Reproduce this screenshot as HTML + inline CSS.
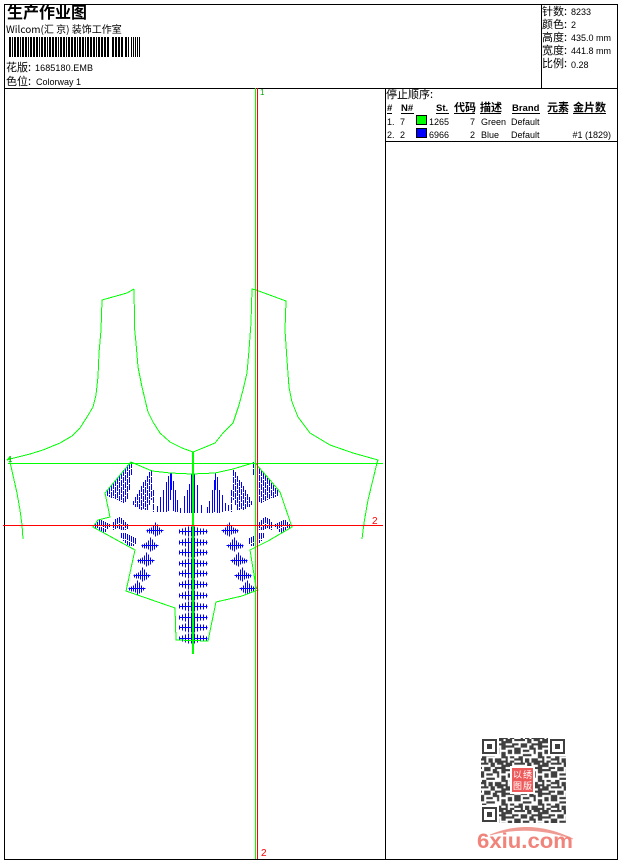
<!DOCTYPE html>
<html lang="zh">
<head>
<meta charset="utf-8">
<title>生产作业图</title>
<style>
html,body{margin:0;padding:0;background:#fff;width:620px;height:860px;overflow:hidden}
svg{display:block}
text{font-family:"Liberation Sans","WenQuanYi Zen Hei","Noto Sans CJK SC",sans-serif;font-size:9px;fill:#000}
.c{font-family:"WenQuanYi Zen Hei","Noto Sans CJK SC",sans-serif;font-size:11px}
.b{font-weight:bold;font-size:9.5px}
.cb{font-family:"WenQuanYi Zen Hei","Noto Sans CJK SC",sans-serif;font-size:11px;font-weight:bold}
.g{fill:none;stroke:#0f0;stroke-width:1}
.s{fill:none;stroke:#00f;stroke-width:1;shape-rendering:crispEdges}
.d{fill:none;stroke:#0000ff;stroke-width:1;stroke-dasharray:6 1;shape-rendering:auto}
</style>
</head>
<body>
<svg xmlns="http://www.w3.org/2000/svg" width="620" height="860" viewBox="0 0 620 860">
<defs>
<g id="comb"><path class="s" d="M179.500 .5H207.500M179.500-1.500v4M182.500-2.500v6M185.500-3.500v8M188.500-4.500v10M191.500-4.500v10M194.500-4.500v10M197.500-3.500v8M200.500-2.500v6M203.500-2.500v6M206.500-1.500v4"/></g>
<g id="fish"><path class="s" d="M-8.500 .5H8.500M-7.500-.5v3M-5.500-1.500v5M-3.500-2.500v6M-1.500-4.500v9M.5-7.500v14M2.500-5.500v11M4.500-2.500v7M6.500-.5v3"/></g>
<g id="half">
<path class="d" d="M107.500 490V496M109.500 488V497M111.500 485V498M113.500 483V498M115.500 480V499M117.500 478V500M119.500 475V501M121.500 473V502M123.500 470V503M125.500 468V502M127.500 465V500M129.500 463V490M131.500 462V475"/>
<path class="d" d="M133.500 501V505M135.500 497V507M137.500 494V508M139.500 490V509M141.500 486V510M143.500 482V510M145.500 480V510M147.500 476V511M149.500 472V505M151.500 470V500M153.500 490V512"/>
<path class="d" d="M95.500 524v4M97.500 522v8M99.500 520v10M101.500 520v12M103.500 521v12M105.500 522v10M107.500 523v6M109.500 524v3M113.500 522v8M115.500 519v10M117.500 518v10M119.500 517v12M121.500 518v12M123.500 520v10M125.500 522v8M127.500 524v5M121.500 533v5M123.500 533v8M125.500 533v10M127.500 534v11M129.500 535v11M131.500 536v10M133.500 537v9M135.500 538v6"/>
<use href="#fish" x="155" y="530"/><use href="#fish" x="150" y="545"/><use href="#fish" x="146" y="560"/><use href="#fish" x="142" y="575"/><use href="#fish" x="137" y="588"/>
</g>
<pattern id="qr" width="17" height="11" patternUnits="userSpaceOnUse" patternTransform="translate(482 739) scale(2.15)">
<path fill="#3f3f3f" d="M0 0h3v1H0zM4 0h2v2H4zM7 0h3v1H7zM11 0h3v2h-3zM15 0h2v1h-2zM1 2h3v2H1zM6 2h3v1H6zM9 1h2v4H9zM14 2h3v1h-3zM5 3h2v2H5zM11 3h4v1h-4zM0 4h1v3H0zM2 5h3v1H2zM7 4h1v3H7zM12 5h2v2h-2zM15 4h2v3h-2zM2 7h4v1H2zM9 6h2v3H9zM13 8h2v1h-2zM0 8h2v2H0zM3 9h2v2H3zM6 9h3v2H6zM11 8h1v3h-1zM15 9h2v1h-2zM1 10h1v1H1zM9 10h2v1H9zM13 10h2v1h-2z"/>
</pattern>
</defs>

<!-- frame -->
<g shape-rendering="crispEdges" stroke="#000" fill="none">
<path d="M4.500 4.500H617.500V859.500H4.500ZM4.500 88.500H617.500M541.500 4.500V88.500M385.500 88.500V859.500M385.500 141.500H617.500"/>
</g>

<!-- header left -->
<text x="7" y="18" class="cb" style="font-size:16px">生产作业图</text>
<text x="6" y="33" class="c" style="font-size:10px">Wilcom(汇 京) 装饰工作室</text>
<path shape-rendering="crispEdges" fill="#000" d="M9 37h2v20H9zM12 37h1v20h-1zM14 37h2v20h-2zM17 37h2v20h-2zM20 37h1v20h-1zM22 37h2v20h-2zM25 37h2v20h-2zM28 37h1v20h-1zM30 37h2v20h-2zM33 37h2v20h-2zM36 37h2v20h-2zM39 37h1v20h-1zM41 37h2v20h-2zM44 37h2v20h-2zM47 37h1v20h-1zM49 37h2v20h-2zM52 37h2v20h-2zM55 37h2v20h-2zM58 37h1v20h-1zM60 37h2v20h-2zM63 37h2v20h-2zM66 37h1v20h-1zM68 37h2v20h-2zM71 37h2v20h-2zM74 37h2v20h-2zM77 37h1v20h-1zM79 37h2v20h-2zM82 37h2v20h-2zM85 37h1v20h-1zM87 37h2v20h-2zM90 37h2v20h-2zM93 37h2v20h-2zM96 37h1v20h-1zM98 37h2v20h-2zM101 37h2v20h-2zM104 37h2v20h-2zM107 37h2v20h-2zM112 37h2v20h-2zM115 37h2v20h-2zM118 37h2v20h-2zM121 37h2v20h-2zM125 37h2v20h-2zM128 37h1v20h-1zM131 37h1v20h-1zM133 37h1v20h-1zM135 37h1v20h-1zM137 37h1v20h-1zM139 37h1v20h-1z"/>
<text x="6" y="71" class="c">花版:</text><text x="35" y="71" textLength="58">1685180.EMB</text>
<text x="6" y="85" class="c">色位:</text><text x="36" y="85" textLength="45">Colorway 1</text>

<!-- header right -->
<text x="542" y="15" class="c">针数:</text><text x="571" y="15">8233</text>
<text x="542" y="28" class="c">颜色:</text><text x="571" y="28">2</text>
<text x="542" y="41" class="c">高度:</text><text x="571" y="41">435.0 mm</text>
<text x="542" y="54" class="c">宽度:</text><text x="571" y="54">441.8 mm</text>
<text x="542" y="67" class="c">比例:</text><text x="571" y="68">0.28</text>

<!-- table -->
<text x="386" y="98" class="c">停止顺序:</text>
<text x="387" y="111" class="b">#</text>
<text x="401" y="111" class="b">N#</text>
<text x="436" y="111" class="b">St.</text>
<text x="454" y="111" class="cb">代码</text>
<text x="480" y="111" class="cb">描述</text>
<text x="512" y="111" class="b">Brand</text>
<text x="547" y="111" class="cb">元素</text>
<text x="573" y="111" class="cb">金片数</text>
<path shape-rendering="crispEdges" stroke="#000" d="M387 113.500h5M401 113.500h13M436 113.500h13M454 113.500h21M480 113.500h21M512 113.500h28M548 113.500h20M573 113.500h33"/>
<text x="387" y="125">1.</text><text x="400" y="125">7</text>
<rect x="416.500" y="115.500" width="10" height="9" fill="#0f0" stroke="#000" shape-rendering="crispEdges"/>
<text x="429" y="125">1265</text><text x="475" y="125" text-anchor="end">7</text><text x="481" y="125">Green</text><text x="511" y="125">Default</text>
<text x="387" y="138">2.</text><text x="400" y="138">2</text>
<rect x="416.500" y="128.500" width="10" height="9" fill="#00f" stroke="#000" shape-rendering="crispEdges"/>
<text x="429" y="138">6966</text><text x="475" y="138" text-anchor="end">2</text><text x="481" y="138">Blue</text><text x="511" y="138">Default</text><text x="611" y="138" text-anchor="end">#1 (1829)</text>

<!-- stitches -->
<use href="#half"/>
<use href="#half" transform="translate(385 0) scale(-1 1)"/>
<path class="s" d="M157.500 506V512M160.500 497V512M163.500 490V512M166.500 482V512M168.500 476V511M170.500 473V500M171.500 473V490M173.500 481V511M175.500 490V512M177.500 500V512M180.500 508V513M184.500 496V513M187.500 490V513M189.500 484V513M191.500 474V513M194.500 474V513M197.500 485V513M201.500 505V513M207.500 507V513M209.500 501V513M212.500 490V513M214.500 480V512M215.500 473V490M217.500 477V513M219.500 490V513M222.500 495V512M225.500 503V511M228.500 505V511"/>
<use href="#comb" y="531"/><use href="#comb" y="542"/><use href="#comb" y="552"/><use href="#comb" y="563"/><use href="#comb" y="573"/><use href="#comb" y="584"/><use href="#comb" y="595"/><use href="#comb" y="606"/><use href="#comb" y="617"/><use href="#comb" y="627"/><use href="#comb" y="638"/>

<!-- green outlines -->
<g shape-rendering="crispEdges">
<path class="g" d="M134 289L127 293L102 300L101 330L99 353L98 377L96 395L93 407L87 417L80 428L72 436L60 443L43 450L30 454L10 459L7 460L10 457L10 462L17 493L20 510L22 525L23 539"/>
<path class="g" d="M134 289L134.700 330L136 343L138 367L142 387L148 412L153 422L160 433L170 442L182 448L193 452L203 448L215 443L223 433L233 423L239 405L243 390L247 373L249 350L251 323L252 289L256 290L286 301L285 330L287 360L289 387L292 402L298 417L310 433L330 445L353 453L378 460L377 463L368 500L364 523L362 539"/>
<path class="g" d="M131 462L152 471L170 473L192 474L215 473L233 469L253 463L256 464L270 480L280 492L292 527L268 541L250 550L256 587L258 590L242 596L216 602L208 641L176 640L175 608L126 591L135 550L93 527L98 520L110 517L105 493Z"/>
<path class="g" d="M8 463.500H383M255.500 88V859"/>
<path d="M192 452h2v202h-2z" fill="#0f0"/>
<path d="M257.500 88V859M3 525.500H383" stroke="#f00" fill="none"/>
</g>
<text x="260" y="95" style="fill:#0a0;font-size:8px">1</text>
<text x="8" y="462" style="fill:#0a0;font-size:8px">1</text>
<text x="372" y="524" style="fill:#f00;font-size:10px">2</text>
<text x="261" y="856" style="fill:#f00;font-size:10px">2</text>

<!-- QR -->
<rect x="481" y="738" width="85" height="85" fill="url(#qr)"/>
<rect x="480" y="737" width="19" height="19" fill="#fff"/><rect x="548" y="737" width="19" height="19" fill="#fff"/><rect x="480" y="805" width="19" height="19" fill="#fff"/>
<g fill="none" stroke="#3f3f3f" stroke-width="2">
<rect x="483" y="740" width="13" height="13"/><rect x="551" y="740" width="13" height="13"/><rect x="483" y="808" width="13" height="13"/>
</g>
<g fill="#3f3f3f"><rect x="487" y="744" width="5" height="5"/><rect x="555" y="744" width="5" height="5"/><rect x="487" y="812" width="5" height="5"/></g>
<rect x="510" y="766" width="25" height="28" fill="#fff"/>
<rect x="512" y="768" width="21" height="24" fill="#ee5a5a"/>
<text x="513" y="778" style="fill:#fff;font-size:9px" class="c">以</text><text x="523" y="778" style="fill:#fff;font-size:9px" class="c">绣</text>
<text x="513" y="789" style="fill:#fff;font-size:9px" class="c">图</text><text x="523" y="789" style="fill:#fff;font-size:9px" class="c">版</text>

<!-- 6xiu logo -->
<path d="M490 835Q530 818 573 839Q530 824 490 835Z" fill="#ef9a92" stroke="#ef9a92" stroke-width=".8"/>
<text x="477" y="848" textLength="96" lengthAdjust="spacingAndGlyphs" style="font-size:21px;font-weight:bold;fill:#f0847a">6xiu.com</text>
</svg>
</body>
</html>
